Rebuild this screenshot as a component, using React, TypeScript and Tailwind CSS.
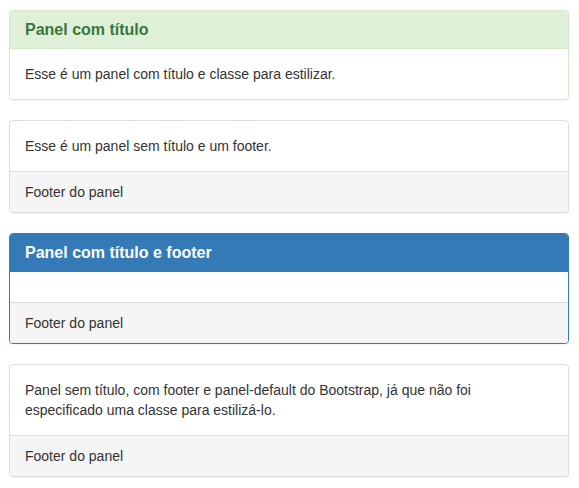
import React from "react";

type PanelProps = {
  variant?: "default" | "success" | "primary";
  title?: string;
  body?: React.ReactNode;
  footer?: string;
};

const styles = {
  default: { border: "border-[#ddd]", heading: "bg-[#f5f5f5] text-[#333] border-[#ddd]" },
  success: { border: "border-[#d6e9c6]", heading: "bg-[#dff0d8] text-[#3c763d] border-[#d6e9c6]" },
  primary: { border: "border-[#337ab7]", heading: "bg-[#337ab7] text-white border-[#337ab7]" },
};

const Panel = ({ variant = "default", title, body, footer }: PanelProps) => {
  const s = styles[variant];
  return (
    <div
      className={`mb-5 overflow-hidden rounded-[4px] border bg-white shadow-[0_1px_1px_rgba(0,0,0,0.05)] ${s.border}`}
    >
      {title && (
        <div className={`border-b px-[15px] py-[10px] ${s.heading}`}>
          <h3 className="text-[16px] leading-[17px] font-bold">{title}</h3>
        </div>
      )}
      <div className="p-[15px] leading-5">{body}</div>
      {footer && (
        <div className="border-t border-[#ddd] bg-[#f5f5f5] px-[15px] py-[10px] leading-5">
          {footer}
        </div>
      )}
    </div>
  );
};

export default function App() {
  return (
    <div className="min-h-screen bg-white pt-[10px] pr-[10px] pl-[9px] font-['Liberation_Sans',Arial,sans-serif] text-[14px] text-[#333]">
      <Panel
        variant="success"
        title="Panel com título"
        body="Esse é um panel com título e classe para estilizar."
      />
      <Panel body="Esse é um panel sem título e um footer." footer="Footer do panel" />
      <Panel variant="primary" title="Panel com título e footer" footer="Footer do panel" />
      <Panel
        body={
          <>
            Panel sem título, com footer e panel-default do Bootstrap, já que não foi
            <br />
            especificado uma classe para estilizá-lo.
          </>
        }
        footer="Footer do panel"
      />
    </div>
  );
}
